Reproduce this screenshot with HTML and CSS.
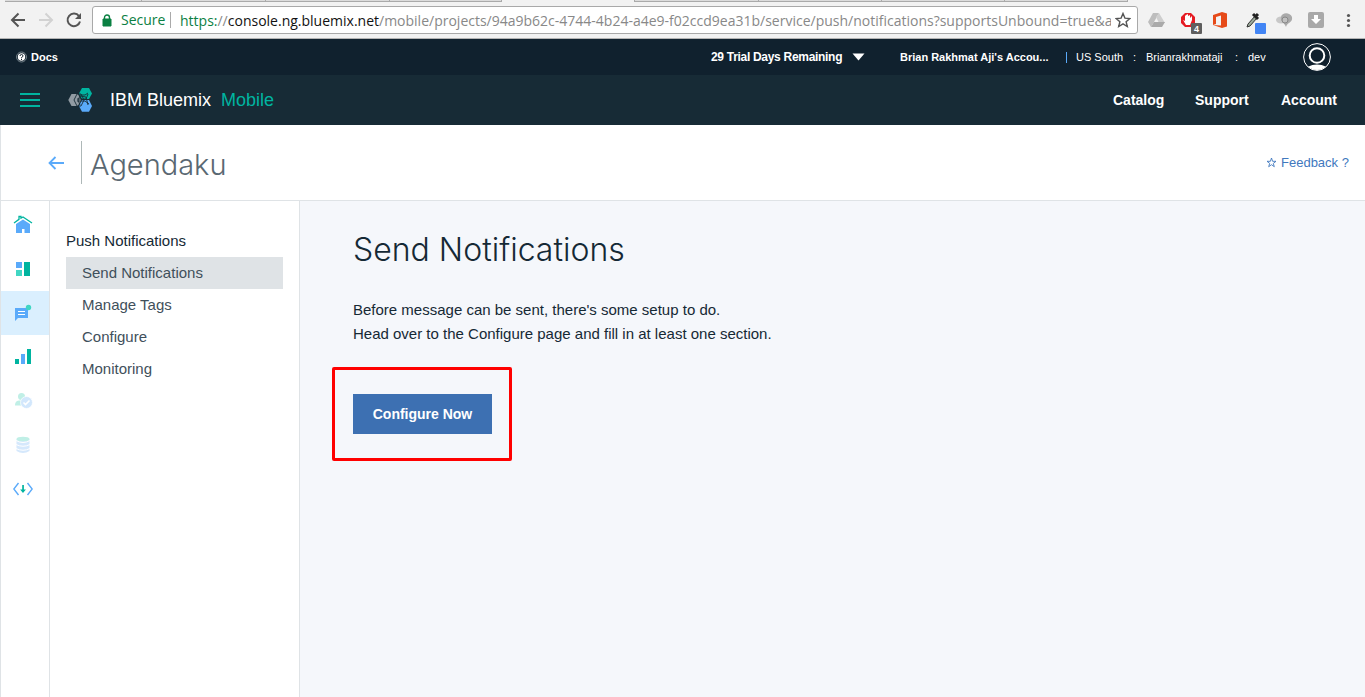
FILE: index.html
```html
<!DOCTYPE html>
<html lang="en">
<head>
<meta charset="utf-8">
<title>Send Notifications</title>
<link rel="stylesheet" href="styles.css">
</head>
<body>
<div class="browser">
  <div class="tabs"><i class="tab t1"></i><i class="tab t2"></i><i class="tab t3"></i><i class="tab t4"></i><i class="tab active"></i><i class="tab t5"></i><i class="tab t6"></i><i class="tab t6"></i><i class="tab t6"></i></div>
  <div class="toolbar">
    <svg class="nav-icons" width="92" height="32" viewBox="0 4 92 32" fill="none" stroke-width="2">
      <path d="M25 20H12M18.5 13.5 12 20l6.500 6.500" stroke="#555"/>
      <path d="M39 20h13M45.500 13.500 52 20l-6.500 6.500" stroke="#d2d2d2"/>
      <path d="M79 16.200A6.300 6.300 0 1 0 80 21.500" stroke="#555"/><path d="M81 13v6h-6z" fill="#555"/>
    </svg>
    <div class="address">
      <svg width="10" height="13" viewBox="0 0 10 13"><path d="M1 5h8v7H1z" fill="#0b8043" stroke="#0b8043"/><path d="M2.500 5V3.500a2.500 2.500 0 0 1 5 0V5" fill="none" stroke="#0b8043" stroke-width="1.400"/></svg>
      <span class="secure">Secure</span>
      <span class="url"><span class="scheme">https:</span>//<b>console.ng.bluemix.net</b>/mobile/projects/94a9b62c-4744-4b24-a4e9-f02ccd9ea31b/service/push/notifications?supportsUnbound=true&amp;ace_cor</span>
      <svg class="bookmark" width="16" height="16" viewBox="0 0 16 16"><path d="m8 1.500 1.900 4.600 5 .4-3.800 3.200 1.200 4.800L8 11.900l-4.300 2.600 1.200-4.800L1.100 6.500l5-.4z" fill="none" stroke="#555" stroke-width="1.400"/></svg>
    </div>
    <svg class="extensions" width="227" height="32" viewBox="1138 4 227 32">
      <path d="M1153 13h6l-5 9-3 5-3-5z" fill="#bdbdbd"/><path d="m1159 13 6 10h-6l-3-6z" fill="#cecece"/><path d="M1154 22h11l-3 5h-11z" fill="#aaa"/>
      <path d="M1185 13h6l4 4v6l-4 4h-6l-4-4v-6z" fill="#e51b23"/><path d="M1185 16v5l-2-1 3 5h4l2-5v-4l-2 2v-3l-2 1v-2l-2 1z" fill="#fff"/>
      <rect x="1191" y="23" width="11" height="11" rx="1" fill="#5e5e5e"/><text x="1194" y="32" font-size="9" font-weight="700" fill="#fff" font-family="Liberation Sans, sans-serif">4</text>
      <path d="m1213 15 9-3 5 1.500v13l-5 1.500-9-3 8 .5V15.500l-5 1.500v7l-3 1z" fill="#e64a19"/>
      <path d="m1247 27 1-3 7-8 2 2-7 8z" fill="#9cab9c" stroke="#333"/><path d="m1253 14 5 5M1255 17l3-3" stroke="#222" stroke-width="3"/>
      <rect x="1255" y="23" width="11" height="11" rx="1" fill="#4285f4"/>
      <ellipse cx="1281" cy="20" rx="5" ry="3.500" fill="#c8c8c8"/><path d="M1281 17c1-5 9-5 11 0 1 6-5 5-6 10-1-4-6-5-5-10z" fill="#aaa"/><circle cx="1285" cy="20" r="3" fill="#c0c0c0" stroke="#888"/>
      <rect x="1308" y="12" width="16" height="16" rx="2" fill="#a9a9a9"/><path d="M1314 15h4v4h3l-5 5-5-5h3z" fill="#fff"/>
      <g fill="#555"><circle cx="1348.500" cy="15.500" r="1.600"/><circle cx="1348.500" cy="20.500" r="1.600"/><circle cx="1348.500" cy="25.500" r="1.600"/></g>
    </svg>
  </div>
</div>
<header>
  <div class="utility">
    <svg width="11" height="12" viewBox="0 0 11 12"><circle cx="5.500" cy="6" r="5" fill="none" stroke="#8c989f" stroke-width=".8"/><circle cx="5.500" cy="6" r="3.700" fill="#fff"/><path d="M4 5q0-1.500 1.500-1.500T7 5q0 .8-1.500 1.500v.8M5.500 8v1" fill="none" stroke="#10212e"/></svg>
    <span class="docs">Docs</span>
    <span class="trial">29 Trial Days Remaining</span>
    <svg class="caret" width="13" height="8" viewBox="0 0 13 8"><path d="M.500 .500h12L6.500 7.500z" fill="#fff"/></svg>
    <span class="account-name">Brian Rakhmat Aji's Accou...</span>
    <i class="bar"></i>
    <span class="region">US South</span><span class="colon">:</span><span class="org">Brianrakhmataji</span><span class="colon two">:</span><span class="space">dev</span>
    <svg class="avatar" width="28" height="28" viewBox="0 0 28 28"><defs><clipPath id="c"><circle cx="14" cy="14" r="13"/></clipPath></defs><ellipse cx="14" cy="28" rx="12" ry="6.500" fill="#fff" clip-path="url(#c)"/><circle cx="14" cy="14" r="13.400" fill="none" stroke="#fff"/><circle cx="14" cy="12.500" r="7.300" fill="#10212e" stroke="#fff" stroke-width="2"/></svg>
  </div>
  <div class="mainbar">
    <div class="menu"><i></i><i></i><i></i></div>
    <svg class="logo" width="24" height="26" viewBox="0 0 24 26"><path d="M3.500 7h6.300l3.300 6-3.300 6H3.500L.300 13z" fill="#919ba3"/><path d="M14 1h7l3 5.500-3 5.500h-7l-3-5.500z" fill="#00b4a0"/><path d="M14 13h7l3 6-3 5.800h-7L11 19z" fill="#5aaafa"/><g fill="none" stroke="#172b36" stroke-width=".9"><path d="M9 7h4l3 6-3 6H9l-3-6z"/><path d="M12 8h5l3-2M20 7l-2 5H9M12 18l-2-5 2-4 6 1 2 8M9 14h8l4 3"/></g></svg>
    <span class="brand">IBM Bluemix</span><span class="product">Mobile</span>
    <nav><span class="catalog">Catalog</span><span class="support">Support</span><span class="account">Account</span></nav>
  </div>
</header>
<div class="project">
  <svg class="back" width="17" height="14" viewBox="0 0 17 14"><path d="M16 7H1.500M7.500 1l-6 6 6 6" fill="none" stroke="#5aaafa" stroke-width="1.800"/></svg>
  <i class="divider"></i>
  <h2>Agendaku</h2>
  <svg class="star" width="11" height="11" viewBox="0 0 11 11"><path d="m5.500 1 1.100 3.300H10L7.300 6.400l1 3.300-2.800-2-2.800 2 1-3.300L1 4.300h3.400z" fill="none" stroke="#4178be" stroke-width=".9"/></svg>
  <a class="feedback">Feedback ?</a>
</div>
<div class="workspace">
  <aside class="rail">
    <div><svg width="20" height="20" viewBox="0 0 20 20"><path d="m1 8 5-3.700V1.500h2v1.700L10 2l9 6" fill="none" stroke="#00b4a0" stroke-width="1.300"/><path d="m3 9 7-4.500L17 9v9h-5.500v-4h-2.500v4H3z" fill="#5aaafa"/></svg></div>
    <div><svg width="20" height="20" viewBox="0 0 20 20"><path d="M3 3h6v6H3z" fill="#5aaafa"/><path d="M3 11h6v6H3z" fill="#41d6c3"/><path d="M11 3h6v14h-6z" fill="#00b4a0"/></svg></div>
    <div class="selected"><svg width="20" height="20" viewBox="0 0 20 20"><path d="M2 5h13v10H5l-3 3z" fill="#5aaafa"/><path d="M5 8.500h7M5 11.500h7" stroke="#fff"/><circle cx="15.500" cy="4.500" r="2.700" fill="#41d6c3"/></svg></div>
    <div><svg width="20" height="20" viewBox="0 0 20 20"><path d="M2 12h4v5H2zM14 2h4v15h-4z" fill="#00b4a0"/><path d="M8 7h4v10H8z" fill="#5aaafa"/></svg></div>
    <div><svg width="20" height="20" viewBox="0 0 20 20"><circle cx="8.500" cy="5.500" r="3.500" fill="#c0efe6"/><path d="M2 14.500c0-4 2-5 5-5h5v5z" fill="#c0efe6"/><circle cx="13.500" cy="11.500" r="6" fill="#d2e7fc" stroke="#fff" stroke-width=".7"/><path d="m10.500 11.500 2 2 4-4" fill="none" stroke="#fff" stroke-width="1.600"/></svg></div>
    <div><svg width="20" height="20" viewBox="0 0 20 20"><g fill="#d5e8fc"><path d="M3.500 4q6.500 4 13 0v12q-6.500 4-13 0z"/></g><ellipse cx="10" cy="4" rx="6.500" ry="2.300" fill="#c0efe6"/><g fill="none" stroke="#fff"><path d="M3 5.500q7 4 14 0M3 9.500q7 3.500 14 0M3 13.500q7 3.500 14 0"/></g></svg></div>
    <div><svg width="20" height="20" viewBox="0 0 20 20"><path d="M5.500 4 .800 10l4.700 6M14.500 4l4.700 6-4.700 6" fill="none" stroke="#5aaafa" stroke-width="1.400"/><path d="M9.200 6h1.700v4.500h2L10 14l-2.900-3.500h2.100z" fill="#00b4a0"/></svg></div>
  </aside>
  <aside class="side">
    <div class="section">Push Notifications</div>
    <div class="item current"><span class="n1">Send Notifications</span></div>
    <div class="item"><span class="n2">Manage Tags</span></div>
    <div class="item"><span class="n3">Configure</span></div>
    <div class="item"><span class="n4">Monitoring</span></div>
  </aside>
  <main>
    <h1>Send Notifications</h1>
    <p><span class="p1">Before message can be sent, there's some setup to do.</span><br><span class="p2">Head over to the Configure page and fill in at least one section.</span></p>
    <div class="highlight"><button>Configure Now</button></div>
  </main>
</div>
</body>
</html>
```
FILE: styles.css
```css
* { box-sizing: border-box; }
body { margin: 0; width: 1365px; height: 697px; overflow: hidden; background: #fff; font-family: "Liberation Sans", Arial, sans-serif; white-space: nowrap; color: #152935; }
svg { display: block; flex: none; }
.browser { height: 39px; background: #f2f2f2; border-bottom: 1px solid #b3b3b3; }
.tabs { height: 2px; display: flex; padding-left: 5px; }
.tab { background: #dcdcdc; border-right: 1px solid #aaa; border-bottom: 1px solid #aaa; flex: none; }
.t1 { width: 137px; } .t2, .t3 { width: 124px; } .t4 { width: 112px; }
.tab.active { width: 133px; background: #f2f2f2; border-bottom: 0; }
.t5 { width: 124px; } .t6 { width: 123px; }
.toolbar { height: 36px; display: flex; align-items: center; }
.address { width: 1046px; height: 28px; border: 1px solid #a9a9a9; border-radius: 3px; background: #fff; display: flex; align-items: center; padding: 0 6px 0 9px; font: 14px "Open Sans", "Noto Sans", sans-serif; }
.secure { color: #0b8043; width: 50px; margin-left: 9px; padding-right: 8px; border-right: 1px solid #aaa; line-height: 16px; }
.url { width: 931px; margin-left: 9px; color: #888; overflow: hidden; }
.url b { font-weight: 400; color: #111; }
.scheme { color: #0b8043; }
.bookmark { margin-left: auto; }
.utility { height: 36px; background: #10212e; display: flex; align-items: center; color: #fff; font-size: 11px; padding-left: 16px; }
.utility span { flex: none; }
.docs { width: 680px; margin-left: 4px; font-weight: 700; }
.trial { width: 141px; font-size: 12px; font-weight: 700; letter-spacing: -.3px; }
.account-name { width: 166px; margin-left: 35px; font-weight: 700; }
.bar { width: 1px; height: 11px; background: #5aaafa; }
.region { margin-left: 9px; width: 57px; }
.colon { width: 13px; }
.org { width: 89px; }
.space { width: 55px; }
.mainbar { height: 50px; background: #172b36; display: flex; align-items: center; color: #fff; padding-left: 20px; }
.menu { width: 20px; height: 14px; display: flex; flex-direction: column; justify-content: space-between; }
.menu i { height: 2px; background: #00b4a0; }
.logo { margin-left: 28px; }
.brand, .product { font-size: 18px; }
.brand { width: 111px; margin-left: 18px; }
.product { color: #00b4a0; }
nav { margin-left: auto; display: flex; font-size: 14px; font-weight: 700; }
.catalog { width: 82px; } .support { width: 86px; } .account { width: 84px; }
.project { height: 76px; border-bottom: 1px solid #dfe3e6; border-left: 1px solid #dfe3e6; display: flex; align-items: center; padding-left: 47px; }
.divider { width: 1px; height: 43px; background: #aeb8b8; margin-left: 16px; }
h2 { margin: 3px 0 0 8px; font: 300 29px "Inter", sans-serif; color: #5a6872; }
.star { margin-left: auto; }
.feedback { width: 84px; margin-left: 4px; font-size: 13px; color: #4178be; }
.workspace { height: 496px; display: flex; }
.rail { width: 50px; border: solid #dfe3e6; border-width: 0 1px; padding-top: 2px; flex: none; }
.rail div { height: 44px; padding: 12px 0 0 12px; }
.rail .selected { background: #daeffe; }
.side { width: 250px; border-right: 1px solid #dfe3e6; padding: 24px 16px; font-size: 15px; flex: none; }
.side div { line-height: 32px; }
.side .item { padding-left: 16px; color: #3f505b; }
.side .current { background: #dfe3e6; }
main { flex: 1; background: #f5f7fb; padding: 24px 0 0 53px; }
h1 { margin: 0; font: 300 32px/50px "Inter", sans-serif; }
p { margin: 23px 0 0; font-size: 15px; line-height: 24px; }
.highlight { width: 180px; height: 94px; border: 3px solid #f00; border-radius: 2px; margin: 21px 0 0 -21px; padding: 24px 18px; }
button { display: block; width: 139px; height: 40px; border: 0; padding: 0; background: #3d70b2; color: #fff; font: 700 14px "Liberation Sans", sans-serif; }
```
